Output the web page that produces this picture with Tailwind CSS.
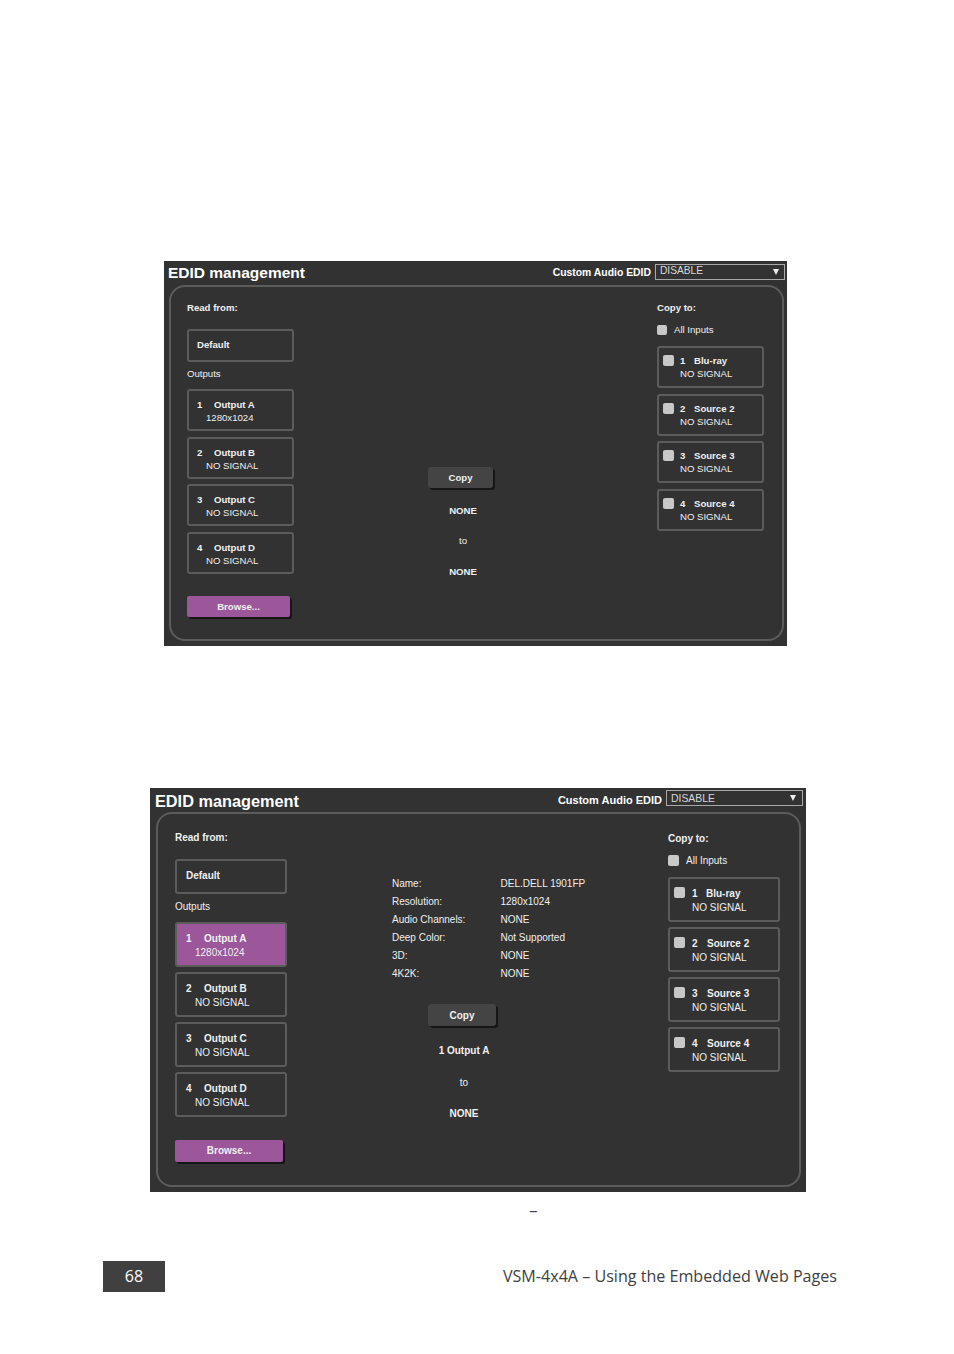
<!DOCTYPE html>
<html lang="en">
<head>
  <meta charset="UTF-8" />
  <title>VSM-4x4A EDID management</title>
  <script src="https://cdn.jsdelivr.net/npm/@tailwindcss/browser@4"></script>
</head>
<body class="bg-white font-['Liberation_Sans',Arial,sans-serif]">
<div class="w-[954px] h-[1354px] pt-[261px] overflow-hidden">

  <!-- First panel -->
  <div class="ml-[164px] w-[623px] h-[385px] bg-[#323232] text-[#f0f0f0] text-[9.6px] leading-[12px]">
    <div class="h-[24px] flex items-center pl-[4px] pr-[2px]">
      <span class="text-[15.5px] font-bold text-white">EDID management</span>
      <span class="ml-auto text-[10.4px] font-bold text-white -mt-[1px]">Custom Audio EDID</span>
      <div class="ml-[4px] w-[130px] h-[16px] border border-[#a8a8a8] flex items-center justify-between pl-[4px] pr-[5px] text-[#d8d8d8] -mt-[3px] leading-[10px] text-[10.2px]">
        <span class="-mt-[2px]">DISABLE</span>
        <svg width="6" height="6" viewBox="0 0 6 6"><path d="M0 0H6L3 6Z" fill="#eee"/></svg>
      </div>
    </div>
    <div class="ml-[5px] w-[615px] h-[356px] border-2 border-[#5c5c5c] rounded-[16px] flex pl-[16px]">
      <!-- Read from -->
      <div class="w-[107px] shrink-0 pt-[15px] flex flex-col">
        <div class="h-[12px] font-bold">Read from:</div>
        <div class="mt-[15px] h-[33px] border-2 border-[#5c5c5c] rounded-[3px] flex items-center pl-[8px] pb-[2px] font-bold">Default</div>
        <div class="mt-[6px] h-[12px]">Outputs</div>
        <div class="mt-[9px] flex flex-col gap-[5.5px]">
          <div class="h-[42px] border-2 border-[#5c5c5c] rounded-[3px] pt-[7px] pl-[8px] leading-[13px]"><div class="flex font-bold"><span class="w-[17px]">1</span><span>Output A</span></div><div class="pl-[9px]">1280x1024</div></div>
          <div class="h-[42px] border-2 border-[#5c5c5c] rounded-[3px] pt-[7px] pl-[8px] leading-[13px]"><div class="flex font-bold"><span class="w-[17px]">2</span><span>Output B</span></div><div class="pl-[9px]">NO SIGNAL</div></div>
          <div class="h-[42px] border-2 border-[#5c5c5c] rounded-[3px] pt-[7px] pl-[8px] leading-[13px]"><div class="flex font-bold"><span class="w-[17px]">3</span><span>Output C</span></div><div class="pl-[9px]">NO SIGNAL</div></div>
          <div class="h-[42px] border-2 border-[#5c5c5c] rounded-[3px] pt-[7px] pl-[8px] leading-[13px]"><div class="flex font-bold"><span class="w-[17px]">4</span><span>Output D</span></div><div class="pl-[9px]">NO SIGNAL</div></div>
        </div>
        <div class="mt-[22.5px] w-[103px] h-[21px] bg-[#9b5799] rounded-[2px] shadow-[2px_2px_0_#161616] flex items-center justify-center font-bold">Browse...</div>
      </div>
      <!-- Copy -->
      <div class="w-[363px] shrink-0 pl-[134px] pt-[180px]">
        <div class="w-[70px] text-center">
          <div class="w-[65px] h-[21px] bg-[#444444] rounded-[3px] shadow-[2px_2px_0_#161616] flex items-center justify-center font-bold">Copy</div>
          <div class="mt-[17px] h-[12px] font-bold">NONE</div>
          <div class="mt-[18px] h-[12px]">to</div>
          <div class="mt-[19px] h-[12px] font-bold">NONE</div>
        </div>
      </div>
      <!-- Copy to -->
      <div class="w-[107px] shrink-0 pt-[15px]">
        <div class="h-[12px] font-bold">Copy to:</div>
        <div class="mt-[10px] h-[12px] flex items-center"><span class="w-[10px] h-[10px] bg-[#c8c8c8] rounded-[2px]"></span><span class="ml-[7px]">All Inputs</span></div>
        <div class="mt-[10px] flex flex-col gap-[5.5px]">
          <div class="h-[42px] border-2 border-[#5c5c5c] rounded-[3px] pt-[6px] pl-[4px] flex leading-[13px]"><span class="w-[11px] h-[11px] bg-[#c8c8c8] rounded-[2px] mt-[1px]"></span><div class="ml-[6px]"><div class="flex font-bold"><span class="w-[14px]">1</span><span>Blu-ray</span></div><div>NO SIGNAL</div></div></div>
          <div class="h-[42px] border-2 border-[#5c5c5c] rounded-[3px] pt-[6px] pl-[4px] flex leading-[13px]"><span class="w-[11px] h-[11px] bg-[#c8c8c8] rounded-[2px] mt-[1px]"></span><div class="ml-[6px]"><div class="flex font-bold"><span class="w-[14px]">2</span><span>Source 2</span></div><div>NO SIGNAL</div></div></div>
          <div class="h-[42px] border-2 border-[#5c5c5c] rounded-[3px] pt-[6px] pl-[4px] flex leading-[13px]"><span class="w-[11px] h-[11px] bg-[#c8c8c8] rounded-[2px] mt-[1px]"></span><div class="ml-[6px]"><div class="flex font-bold"><span class="w-[14px]">3</span><span>Source 3</span></div><div>NO SIGNAL</div></div></div>
          <div class="h-[42px] border-2 border-[#5c5c5c] rounded-[3px] pt-[6px] pl-[4px] flex leading-[13px]"><span class="w-[11px] h-[11px] bg-[#c8c8c8] rounded-[2px] mt-[1px]"></span><div class="ml-[6px]"><div class="flex font-bold"><span class="w-[14px]">4</span><span>Source 4</span></div><div>NO SIGNAL</div></div></div>
        </div>
      </div>
    </div>
  </div>

  <!-- Second panel -->
  <div class="mt-[142px] ml-[150px] w-[656px] h-[404px] bg-[#323232] text-[#f0f0f0] text-[10px] leading-[12px]">
    <div class="h-[24px] flex items-center pl-[5px] pr-[3px]">
      <span class="text-[16.3px] font-bold text-white mt-[1px]">EDID management</span>
      <span class="ml-auto text-[11px] font-bold text-white">Custom Audio EDID</span>
      <div class="ml-[4px] w-[137px] h-[16px] border border-[#a8a8a8] flex items-center justify-between pl-[4px] pr-[6px] text-[#d8d8d8] -mt-[4px] text-[10.4px]">
        <span class="mt-[1px]">DISABLE</span>
        <svg width="6" height="6" viewBox="0 0 6 6"><path d="M0 0H6L3 6Z" fill="#eee"/></svg>
      </div>
    </div>
    <div class="ml-[6px] w-[645px] h-[375px] border-2 border-[#5c5c5c] rounded-[16px] flex pl-[17px]">
      <!-- Read from -->
      <div class="w-[112px] shrink-0 pt-[18px] flex flex-col">
        <div class="h-[12px] font-bold">Read from:</div>
        <div class="mt-[15px] h-[35px] border-2 border-[#5c5c5c] rounded-[3px] flex items-center pl-[9px] pb-[2px] font-bold">Default</div>
        <div class="mt-[7px] h-[12px]">Outputs</div>
        <div class="mt-[9px] flex flex-col gap-[5px]">
          <div class="h-[45px] border-2 border-[#5c5c5c] bg-[#9b5799] rounded-[3px] pt-[8px] pl-[9px] leading-[14px]"><div class="flex font-bold"><span class="w-[18px]">1</span><span>Output A</span></div><div class="pl-[9px]">1280x1024</div></div>
          <div class="h-[45px] border-2 border-[#5c5c5c] rounded-[3px] pt-[8px] pl-[9px] leading-[14px]"><div class="flex font-bold"><span class="w-[18px]">2</span><span>Output B</span></div><div class="pl-[9px]">NO SIGNAL</div></div>
          <div class="h-[45px] border-2 border-[#5c5c5c] rounded-[3px] pt-[8px] pl-[9px] leading-[14px]"><div class="flex font-bold"><span class="w-[18px]">3</span><span>Output C</span></div><div class="pl-[9px]">NO SIGNAL</div></div>
          <div class="h-[45px] border-2 border-[#5c5c5c] rounded-[3px] pt-[8px] pl-[9px] leading-[14px]"><div class="flex font-bold"><span class="w-[18px]">4</span><span>Output D</span></div><div class="pl-[9px]">NO SIGNAL</div></div>
        </div>
        <div class="mt-[23px] w-[108px] h-[22px] bg-[#9b5799] rounded-[2px] shadow-[2px_2px_0_#161616] flex items-center justify-center font-bold">Browse...</div>
      </div>
      <!-- Details and copy -->
      <div class="w-[381px] shrink-0 pt-[61px]">
        <div class="pl-[105px] grid grid-cols-[108.5px_1fr] auto-rows-[18px] items-center">
          <span>Name:</span><span>DEL.DELL 1901FP</span>
          <span>Resolution:</span><span>1280x1024</span>
          <span>Audio Channels:</span><span>NONE</span>
          <span>Deep Color:</span><span>Not Supported</span>
          <span>3D:</span><span>NONE</span>
          <span>4K2K:</span><span>NONE</span>
        </div>
        <div class="mt-[21px] ml-[141px] w-[72px] text-center">
          <div class="w-[68px] h-[22px] bg-[#444444] rounded-[3px] shadow-[2px_2px_0_#161616] flex items-center justify-center pt-[1px] font-bold">Copy</div>
          <div class="mt-[19px] h-[12px] font-bold">1 Output A</div>
          <div class="mt-[20px] h-[12px]">to</div>
          <div class="mt-[19px] h-[12px] font-bold">NONE</div>
        </div>
      </div>
      <!-- Copy to -->
      <div class="w-[112px] shrink-0 pt-[19px]">
        <div class="h-[12px] font-bold">Copy to:</div>
        <div class="mt-[9px] h-[12px] flex items-center"><span class="w-[11px] h-[11px] bg-[#c8c8c8] rounded-[2px]"></span><span class="ml-[7px] mt-[2px]">All Inputs</span></div>
        <div class="mt-[11px] flex flex-col gap-[5px]">
          <div class="h-[45px] border-2 border-[#5c5c5c] rounded-[3px] pt-[8px] pl-[4px] flex leading-[14px]"><span class="w-[11px] h-[11px] bg-[#c8c8c8] rounded-[2px]"></span><div class="ml-[7px]"><div class="flex font-bold"><span class="w-[14px]">1</span><span>Blu-ray</span></div><div>NO SIGNAL</div></div></div>
          <div class="h-[45px] border-2 border-[#5c5c5c] rounded-[3px] pt-[8px] pl-[4px] flex leading-[14px]"><span class="w-[11px] h-[11px] bg-[#c8c8c8] rounded-[2px]"></span><div class="ml-[7px]"><div class="flex font-bold"><span class="w-[15px]">2</span><span>Source 2</span></div><div>NO SIGNAL</div></div></div>
          <div class="h-[45px] border-2 border-[#5c5c5c] rounded-[3px] pt-[8px] pl-[4px] flex leading-[14px]"><span class="w-[11px] h-[11px] bg-[#c8c8c8] rounded-[2px]"></span><div class="ml-[7px]"><div class="flex font-bold"><span class="w-[15px]">3</span><span>Source 3</span></div><div>NO SIGNAL</div></div></div>
          <div class="h-[45px] border-2 border-[#5c5c5c] rounded-[3px] pt-[8px] pl-[4px] flex leading-[14px]"><span class="w-[11px] h-[11px] bg-[#c8c8c8] rounded-[2px]"></span><div class="ml-[7px]"><div class="flex font-bold"><span class="w-[15px]">4</span><span>Source 4</span></div><div>NO SIGNAL</div></div></div>
        </div>
      </div>
    </div>
  </div>

  <!-- Stray dash and page footer -->
  <div class="mt-[8px] ml-[529px] h-[20px] leading-[20px] text-[17px] text-[#404040] font-['Open_Sans',sans-serif]">–</div>
  <div class="mt-[41px] ml-[103px] w-[734px] flex items-center justify-between font-['Open_Sans',sans-serif] text-[#404040]">
    <div class="w-[62px] h-[31px] bg-[#404040] text-white text-[16px] leading-[16px] flex items-center justify-center pb-[2px]">68</div>
    <div class="text-[16.1px] pb-[1px]">VSM-4x4A – Using the Embedded Web Pages</div>
  </div>
</div>
</body>
</html>
